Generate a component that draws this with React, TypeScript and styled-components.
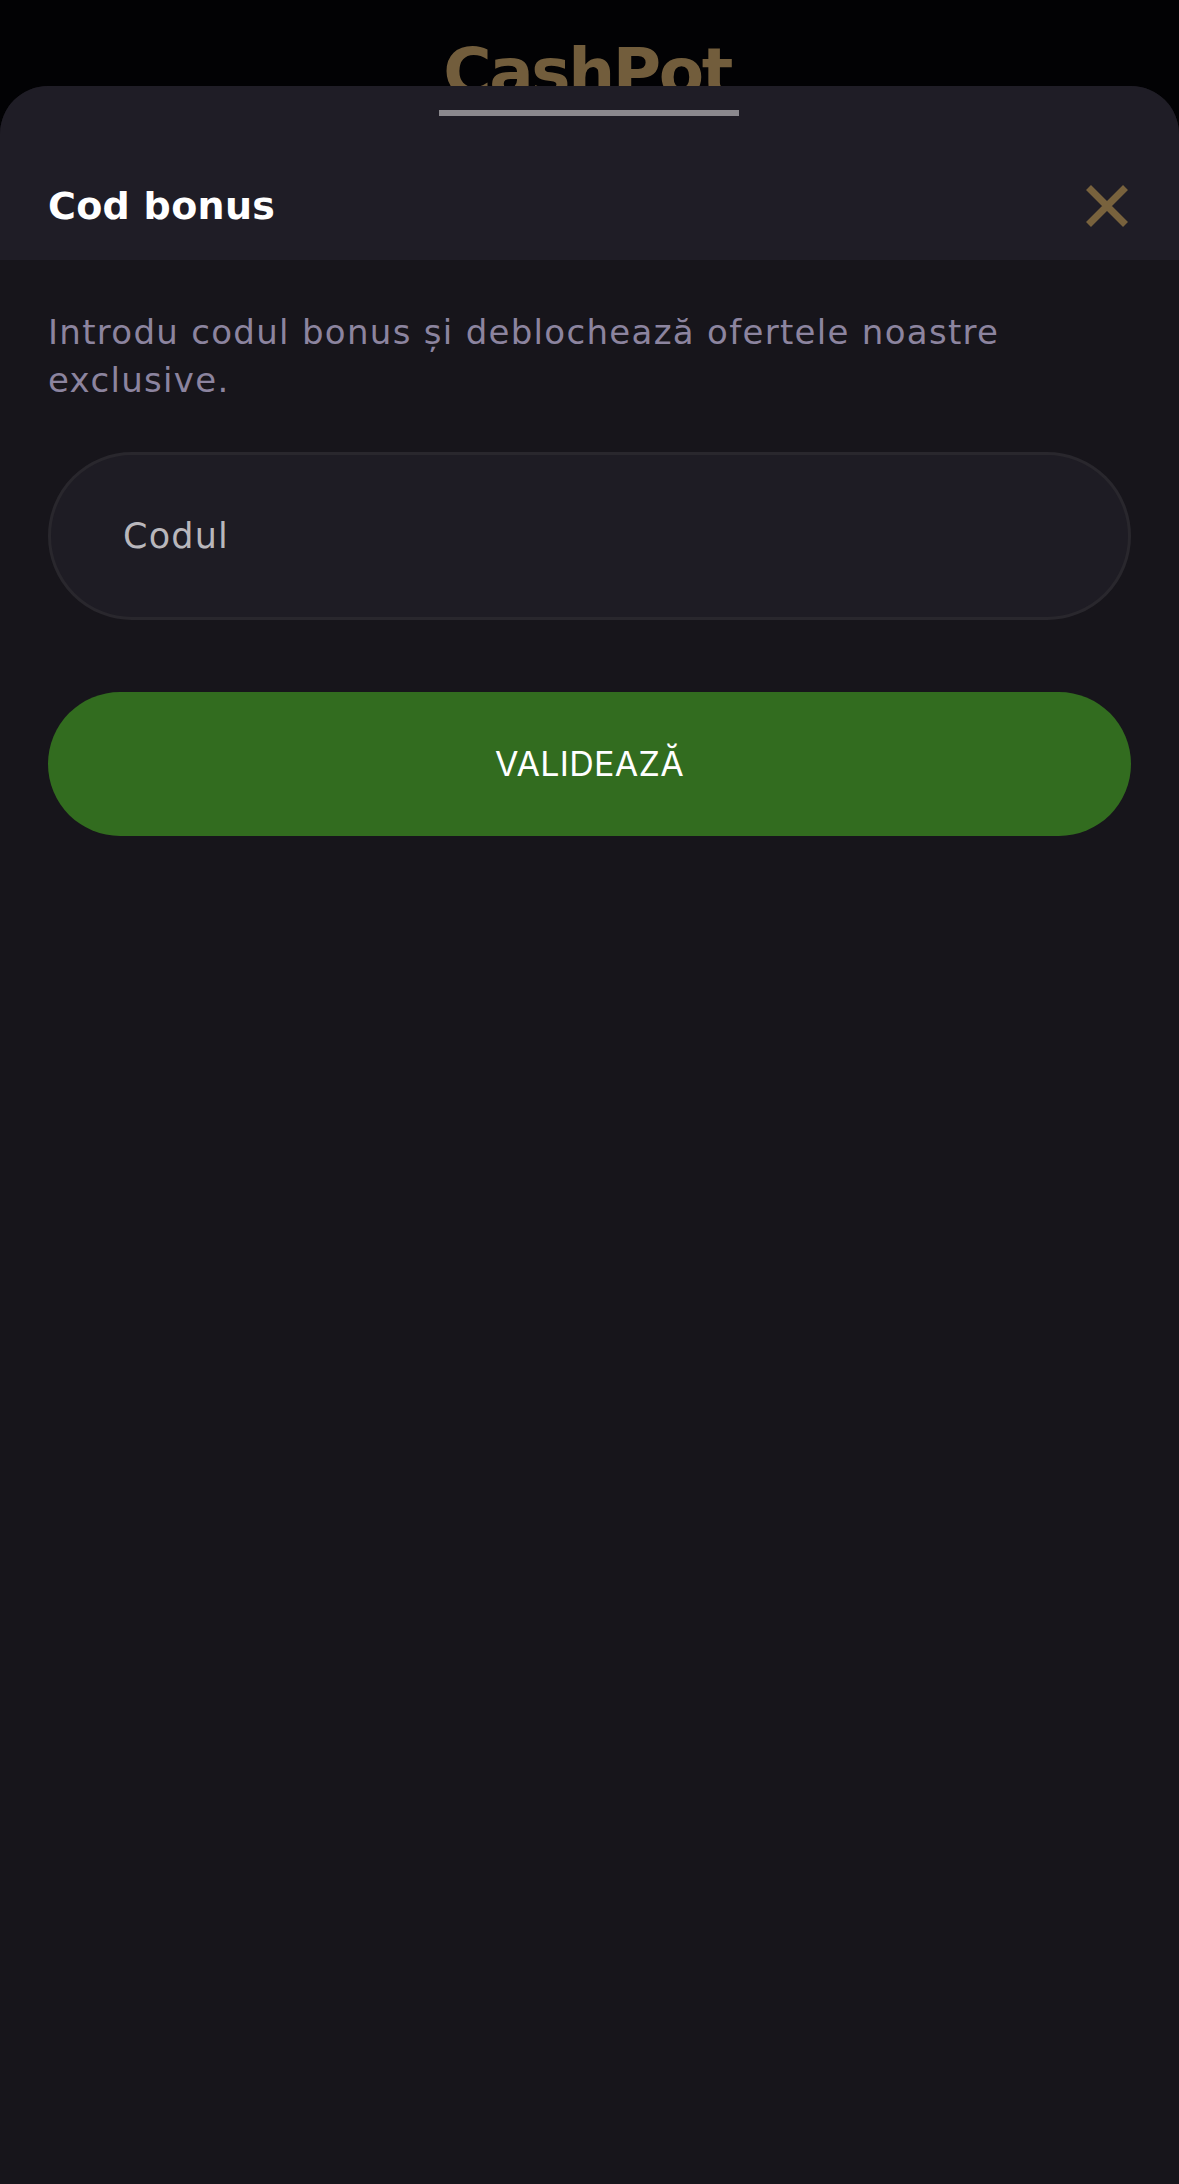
import React from "react";
import styled, { createGlobalStyle } from "styled-components";

const GlobalStyle = createGlobalStyle`
  html, body {
    margin: 0;
    padding: 0;
    background: #020204;
  }
  * {
    box-sizing: border-box;
  }
`;

const styles = {
  Page: styled.div`
    display: flex;
    flex-direction: column;
    width: 1179px;
    height: 2184px;
    overflow: hidden;
    background: #020204;
  `,
  TopBar: styled.div`
    display: flex;
    justify-content: center;
    height: 86px;
    overflow: hidden;
    padding: 33px 5px 0 0;
  `,
  Logo: styled.div`
    font-family: "DejaVu Sans", sans-serif;
    font-size: 66px;
    font-weight: 700;
    line-height: 80px;
    letter-spacing: -2.4px;
    color: #725d3c;
  `,
  Sheet: styled.div`
    display: flex;
    flex-direction: column;
    flex: 1;
    border-radius: 48px 48px 0 0;
    overflow: hidden;
    background: #17151b;
  `,
  SheetHeader: styled.div`
    position: relative;
    display: flex;
    align-items: center;
    justify-content: space-between;
    height: 174px;
    padding: 66px 48px 0;
    background: #1f1d26;
  `,
  Handle: styled.div`
    position: absolute;
    top: 24px;
    left: 439px;
    width: 300px;
    height: 6px;
    background: #8a888d;
  `,
  Title: styled.div`
    font-family: "DejaVu Sans", sans-serif;
    font-size: 38px;
    font-weight: 700;
    letter-spacing: 0.3px;
    color: #ffffff;
  `,
  CloseButton: styled.button`
    display: flex;
    padding: 0;
    border: 0;
    background: none;
  `,
  Body: styled.div`
    display: flex;
    flex-direction: column;
    padding: 48px 48px 0;
  `,
  Description: styled.p`
    margin: 0 0 48px;
    font-family: "DejaVu Sans", sans-serif;
    font-size: 34px;
    line-height: 48px;
    letter-spacing: 1.3px;
    color: #8c849f;
  `,
  CodeInput: styled.input`
    width: 100%;
    height: 168px;
    padding: 0 72px;
    border: 3px solid #29272d;
    border-radius: 84px;
    outline: none;
    background: #1e1c24;
    font-family: "DejaVu Sans", sans-serif;
    font-size: 35px;
    letter-spacing: 1.2px;
    color: #b9b7bc;

    &::placeholder {
      color: #b9b7bc;
      opacity: 1;
    }
  `,
  SubmitButton: styled.button`
    width: 100%;
    height: 144px;
    margin-top: 72px;
    padding: 0 0 2px;
    border: 0;
    border-radius: 72px;
    background: #326c1f;
    font-family: "Inter", sans-serif;
    font-size: 34px;
    font-weight: 400;
    letter-spacing: 0.3px;
    color: #ffffff;
  `
};

const CloseIcon = () => (
  <svg width="48" height="48" viewBox="0 0 48 48" fill="none">
    <path d="M5.5 5.5 L42.5 42.5 M42.5 5.5 L5.5 42.5" stroke="#78623d" strokeWidth="7" />
  </svg>
);

export default function App() {
  return (
    <styles.Page>
      <GlobalStyle />
      <styles.TopBar>
        <styles.Logo>CashPot</styles.Logo>
      </styles.TopBar>
      <styles.Sheet>
        <styles.SheetHeader>
          <styles.Handle />
          <styles.Title>Cod bonus</styles.Title>
          <styles.CloseButton aria-label="Close">
            <CloseIcon />
          </styles.CloseButton>
        </styles.SheetHeader>
        <styles.Body>
          <styles.Description>
            Introdu codul bonus și deblochează ofertele noastre exclusive.
          </styles.Description>
          <styles.CodeInput placeholder="Codul" />
          <styles.SubmitButton>VALIDEAZĂ</styles.SubmitButton>
        </styles.Body>
      </styles.Sheet>
    </styles.Page>
  );
}
